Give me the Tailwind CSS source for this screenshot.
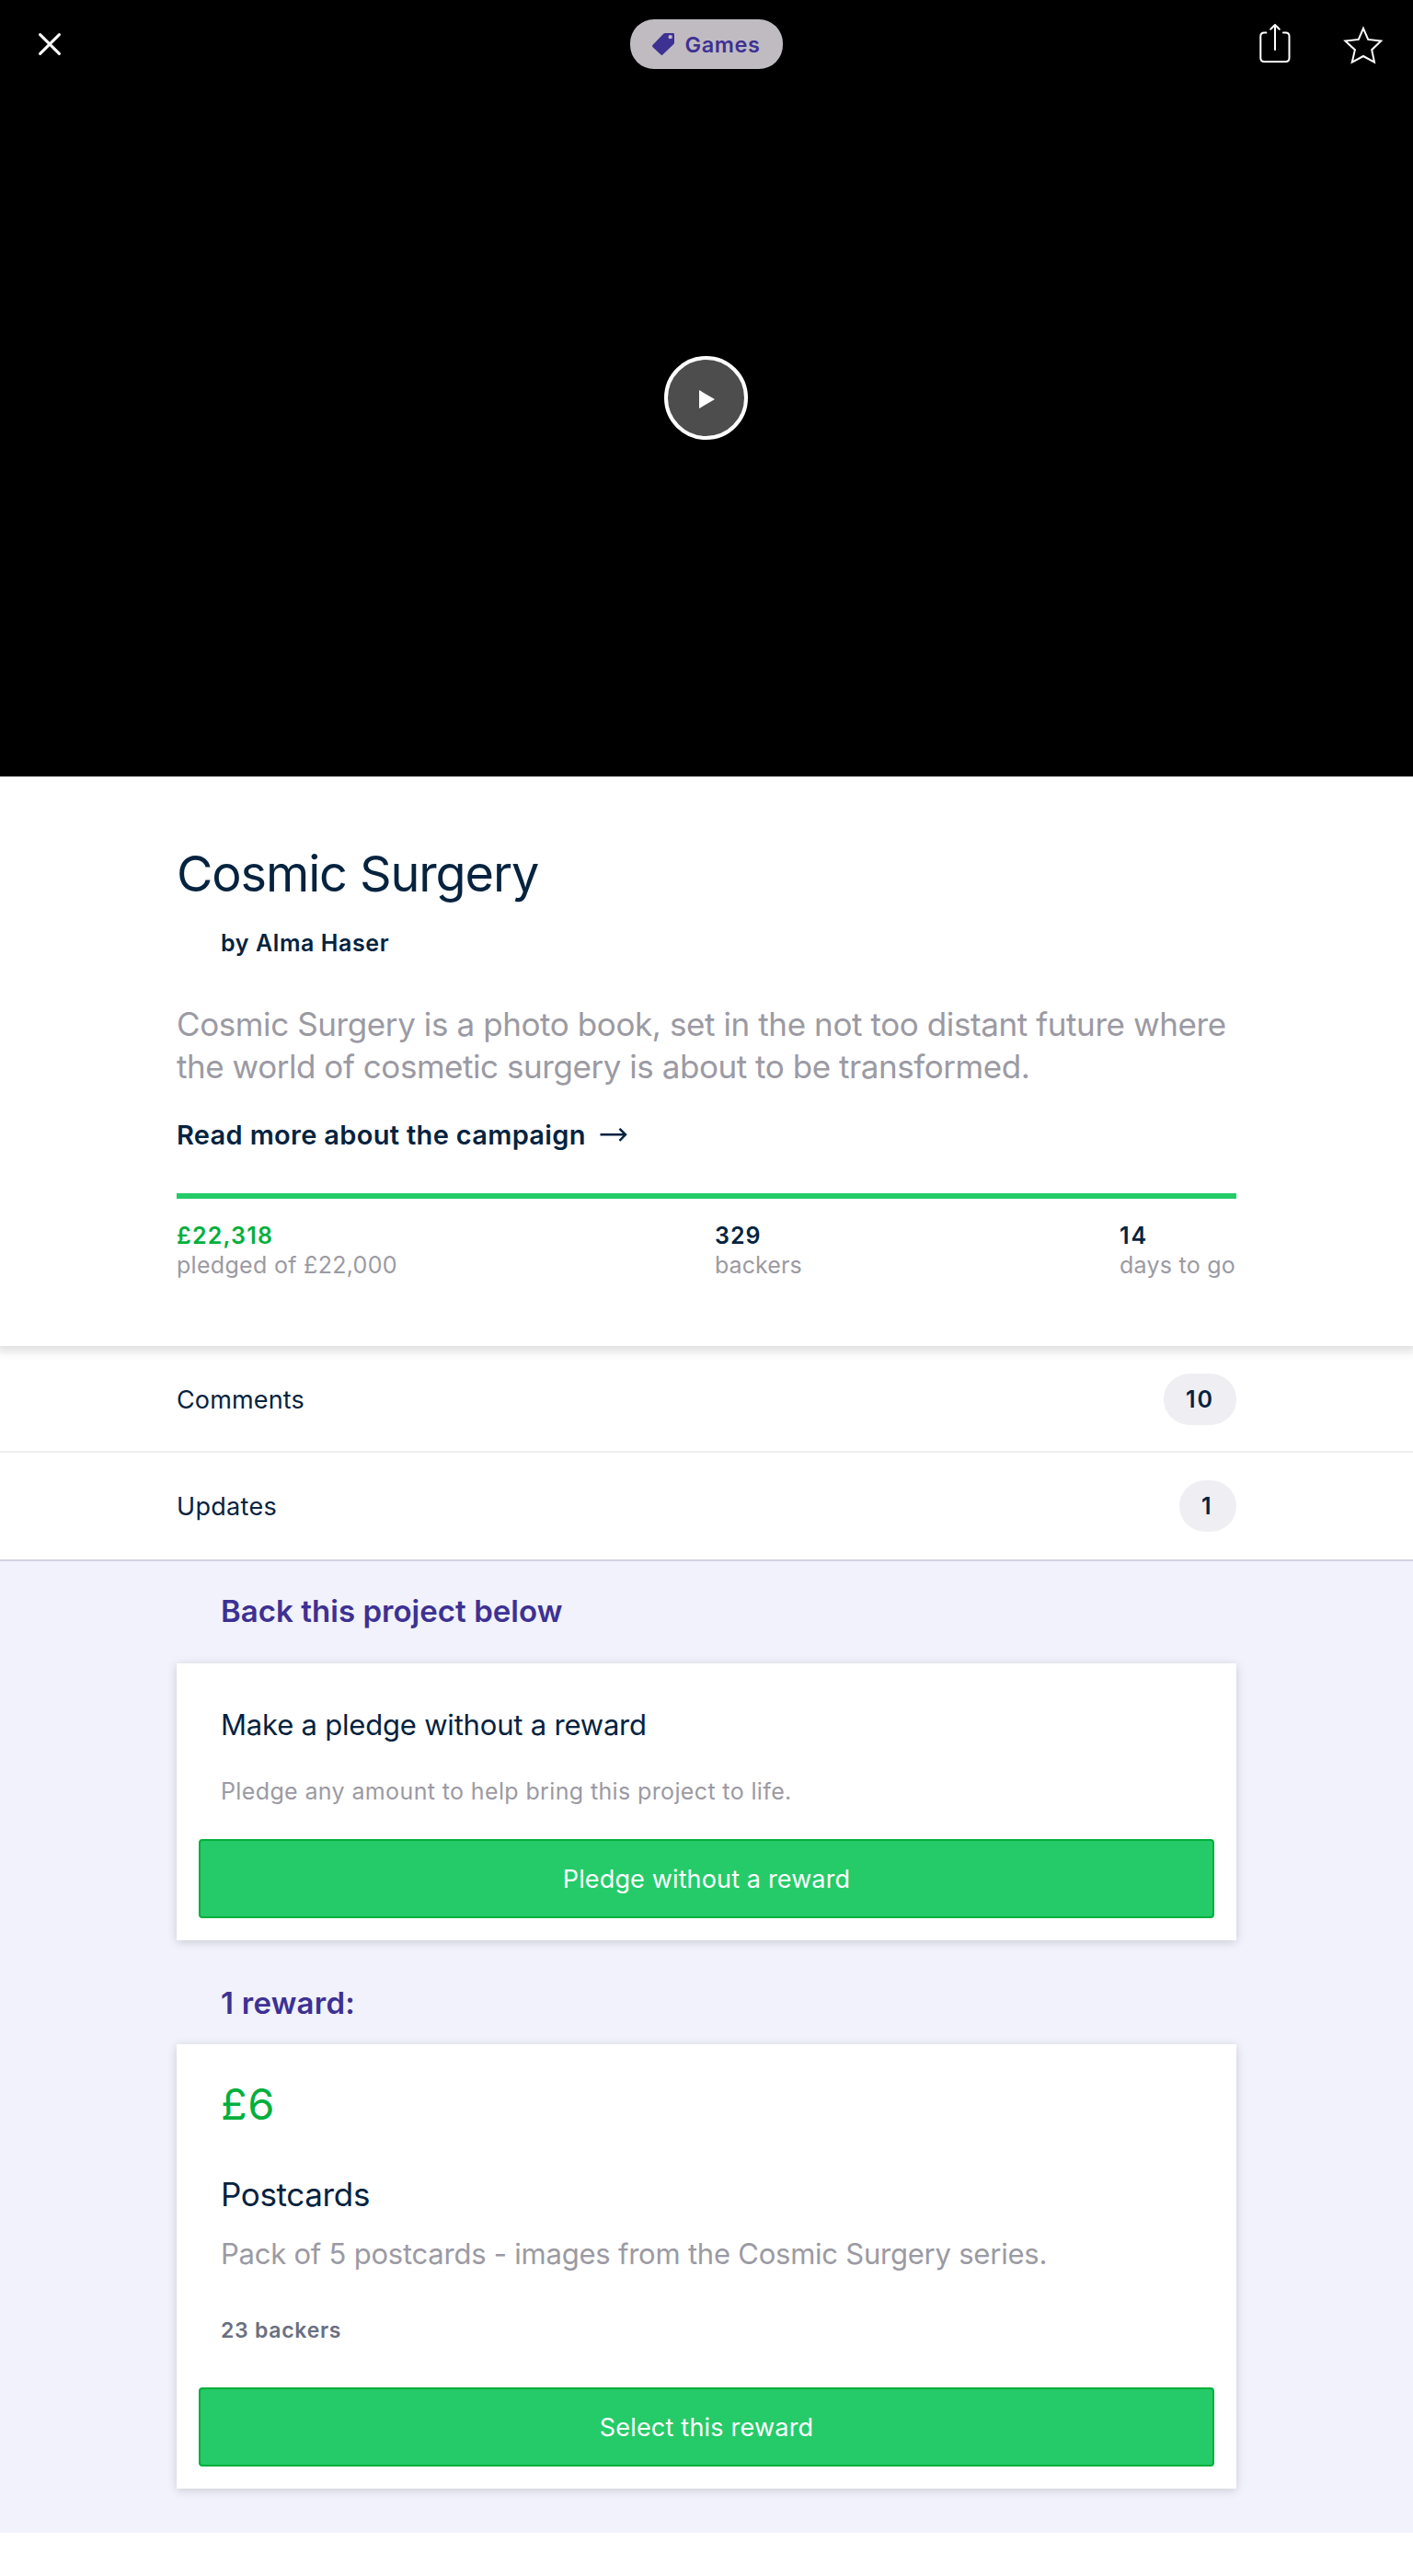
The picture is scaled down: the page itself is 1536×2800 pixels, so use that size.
<!DOCTYPE html>
<html lang="en">
<head>
<meta charset="utf-8">
<title>Cosmic Surgery</title>
<script src="https://cdn.jsdelivr.net/npm/@tailwindcss/browser@4"></script>
</head>
<body class="bg-white font-[Inter,sans-serif] text-[#05233f]">
<!-- Video header -->
<header class="flex h-[844px] flex-col bg-black">
  <div class="grid h-24 grid-cols-[1fr_166px_1fr] items-center">
    <button aria-label="Close" class="ml-[42px] size-6">
      <svg class="size-6" viewBox="0 0 24 24" fill="none" stroke="#fff" stroke-width="3" stroke-linecap="round"><path d="M1.6 1.6 22.4 22.4M22.4 1.6 1.6 22.4"/></svg>
    </button>
    <div class="flex h-[54px] items-center rounded-[26px] bg-[#c0bbc1] pl-6 text-[#3d3193]">
      <svg class="size-6" viewBox="49 36 24 24" fill="currentColor" fill-rule="evenodd"><path d="M63 36H71.6Q73 36 73 37.4V46.2Q73 47.2 72.3 47.9L60.6 59.3Q59.4 60.5 58.2 59.3L49.6 51.2Q48.5 50 49.6 48.8L61.2 36.8Q62 36 63 36ZM68.7 37.9A2.2 2.2 0 1 0 68.7 42.3A2.2 2.2 0 1 0 68.7 37.9Z"/></svg>
      <span class="ml-[11.5px] pt-px text-[23.5px] leading-7 font-semibold tracking-[0.6px]">Games</span>
    </div>
    <div class="flex h-24 justify-end gap-[55px] pr-[31px]">
      <button aria-label="Share" class="w-9">
        <svg class="h-24 w-9" viewBox="38 0 36 96" fill="none" stroke="#fff" stroke-width="2" stroke-linecap="round" stroke-linejoin="round"><path d="M46.4 35.5H44.3Q40.3 35.5 40.3 39.5V63Q40.3 67 44.3 67H67.5Q71.5 67 71.5 63V39.5Q71.5 35.5 67.5 35.5H65M56 54V27M51.2 31.8 56 27 60.8 31.8"/></svg>
      </button>
      <button aria-label="Save" class="w-[46px]">
        <svg class="h-24 w-[46px]" viewBox="129 0 46 96" fill="none" stroke="#fff" stroke-width="2"><path d="M152 30.8 157.2 42.9 171.2 44.5 161.2 54.2 164 67.6 152 61 139.8 67.6 142.9 54.2 132.4 44.5 146.8 42.9Z"/></svg>
      </button>
    </div>
  </div>
  <button aria-label="Play" class="mt-[291px] ml-[722px] flex size-[91px] items-center justify-center rounded-full border-4 border-white bg-[#4d4d4d]">
    <svg class="mt-0.5 ml-0.5 h-5 w-[17px]" viewBox="0 0 17 20" fill="#fff"><path d="M0 0 17 10 0 20Z"/></svg>
  </button>
</header>

<!-- Campaign summary -->
<main>
  <section class="relative bg-white px-48 pt-[73px] pb-[72px] shadow-[0_2px_10px_4px_rgba(0,0,0,0.13)]">
    <h1 class="text-[54px] leading-[66px] tracking-[-1.12px]">Cosmic Surgery</h1>
    <p class="mt-[26px] pl-12 text-[25px] leading-8 font-semibold tracking-[0.6px]">by Alma Haser</p>
    <p class="mt-[49px] text-[35px] leading-[46px] tracking-[-0.4px] whitespace-nowrap text-[#9b9aa3]">Cosmic Surgery is a photo book, set in the not too distant future where<br><span class="tracking-[-0.45px]">the world of cosmetic surgery is about to be transformed.</span></p>
    <a class="mt-[34px] flex items-center text-[29px] leading-9 font-semibold tracking-[0.32px]">Read more about the campaign
      <svg class="ml-[15px] h-4 w-[30px]" viewBox="0 0 30 16" fill="none" stroke="currentColor" stroke-width="2.4"><path d="M.5 7.3H28M21.5 .8 28 7.3 21.5 13.8"/></svg>
    </a>
    <div class="mt-[45px] h-1.5 bg-[#25cb68]"></div>
    <div class="mt-6 flex justify-between pr-px text-[25px] leading-8 text-[#9b9aa3]">
      <div><div class="font-semibold tracking-[1.2px] text-[#03af3c]">£22,318</div><div class="tracking-[0.3px]">pledged of £22,000</div></div>
      <div><div class="font-semibold tracking-[1.1px] text-[#05233f]">329</div><div class="tracking-[0.1px]">backers</div></div>
      <div><div class="font-semibold tracking-[2px] text-[#05233f]">14</div><div class="tracking-[0.25px]">days to go</div></div>
    </div>
  </section>

  <nav class="text-[27px]">
    <a class="flex h-[116px] items-center justify-between border-b-2 border-[#eeeeee] px-48 pt-0.5">
      <span class="pt-0.5 tracking-[0.15px]">Comments</span>
      <span class="flex h-14 items-center rounded-full bg-[#efeef3] px-6 text-[25px] font-semibold"><span class="w-[31px] pt-px tracking-[2px]">10</span></span>
    </a>
    <a class="flex h-[118px] items-center justify-between border-b-2 border-[#d1d2e2] px-48">
      <span class="pt-0.5 tracking-[0.3px]">Updates</span>
      <span class="flex h-14 items-center rounded-full bg-[#efeef3] px-6 text-[25px] font-semibold"><span class="w-3.5 pt-px">1</span></span>
    </a>
  </nav>

  <!-- Rewards -->
  <section class="bg-[#f1f2fb] px-48 pt-[33px] pb-12">
    <h2 class="pl-12 text-[33px] leading-[42px] font-semibold tracking-[0.04px] text-[#3d3193]">Back this project below</h2>
    <article class="mt-9 bg-white px-6 pt-12 pb-6 shadow-[0_2px_10px_rgba(0,0,0,0.16)]">
      <h3 class="pl-6 text-[31px] leading-[38px] tracking-[-0.2px]">Make a pledge without a reward</h3>
      <p class="mt-[37px] pl-6 text-[25px] leading-8 tracking-[0.37px] text-[#9b9aa3]">Pledge any amount to help bring this project to life.</p>
      <button class="mt-9 h-[86px] w-full rounded border-2 border-[#03af3c] bg-[#25cb68] pt-0.5 text-[27px] tracking-[0.14px] text-white">Pledge without a reward</button>
    </article>

    <h2 class="mt-[47px] pl-12 text-[33px] leading-[42px] font-semibold tracking-[0.26px] text-[#3d3193]">1 reward:</h2>
    <article class="mt-6 bg-white px-6 pt-[37px] pb-6 shadow-[0_2px_10px_rgba(0,0,0,0.16)]">
      <div class="pl-6 text-[47px] leading-[56px] tracking-[0.6px] text-[#03af3c]">£6</div>
      <h3 class="mt-[49px] pl-6 text-[35px] leading-[42px] tracking-[-0.35px]">Postcards</h3>
      <p class="mt-[25px] pl-6 text-[31px] leading-[38px] tracking-[-0.23px] text-[#9b9aa3]">Pack of 5 postcards - images from the Cosmic Surgery series.</p>
      <p class="mt-[50px] pl-6 text-[23px] leading-7 font-semibold tracking-[0.73px] text-[#6b6f81]">23 backers</p>
      <button class="mt-12 h-[86px] w-full rounded border-2 border-[#03af3c] bg-[#25cb68] pt-0.5 text-[27px] tracking-[0.21px] text-white">Select this reward</button>
    </article>
  </section>
</main>
</body>
</html>
